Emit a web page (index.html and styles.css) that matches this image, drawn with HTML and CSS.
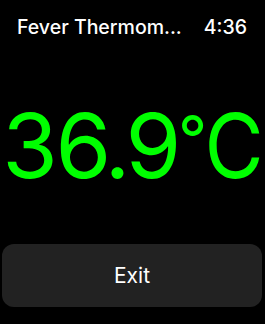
FILE: index.html
```html
<!DOCTYPE html>
<html>
<head>
<meta charset="utf-8">
<link rel="stylesheet" href="styles.css">
</head>
<body>
<div class="screen">
  <header class="top">
    <span class="title">Fever Thermom...</span>
    <span class="time">4:36</span>
  </header>
  <main class="reading"><span class="ch d1">3</span><span class="ch d2">6</span><span class="ch dot">.</span><span class="ch d3">9</span><span class="ch deg">°</span><span class="ch unit">C</span></main>
  <button class="exit">Exit</button>
</div>
</body>
</html>
```

FILE: styles.css
```css
html, body {
  margin: 0;
  padding: 0;
  background: #000;
}
.screen {
  width: 265px;
  height: 324px;
  display: flex;
  flex-direction: column;
  font-family: Inter, "Noto Sans", sans-serif;
  color: #fff;
  overflow: hidden;
}
.top {
  display: flex;
  justify-content: space-between;
  align-items: baseline;
  padding: 15px 18px 0 17px;
  font-size: 19.5px;
  line-height: 24px;
  font-weight: 500;
}
.reading {
  margin-top: 53px;
  padding-left: 3px;
  display: flex;
  align-items: baseline;
  font-family: Inter, "Noto Sans", sans-serif;
  font-size: 90px;
  line-height: 108px;
  color: #00ff00;
  font-weight: 400;
  white-space: nowrap;
}
.ch {
  display: inline-flex;
  justify-content: center;
}
.d1 { width: 54px; }
.d2 { width: 53px; }
.dot { width: 15px; }
.d3 { width: 57px; }
.deg {
  width: 21px;
  font-size: 64px;
  position: relative;
  top: -16px;
}
.unit {
  width: 62px;
  transform: scaleX(0.9);
}
.exit {
  margin: auto 3px 17px 2px;
  height: 63px;
  border: none;
  border-radius: 12px;
  background: #222;
  color: #fff;
  font-family: Inter, "Noto Sans", sans-serif;
  font-size: 21px;
  font-weight: 400;
}
```
